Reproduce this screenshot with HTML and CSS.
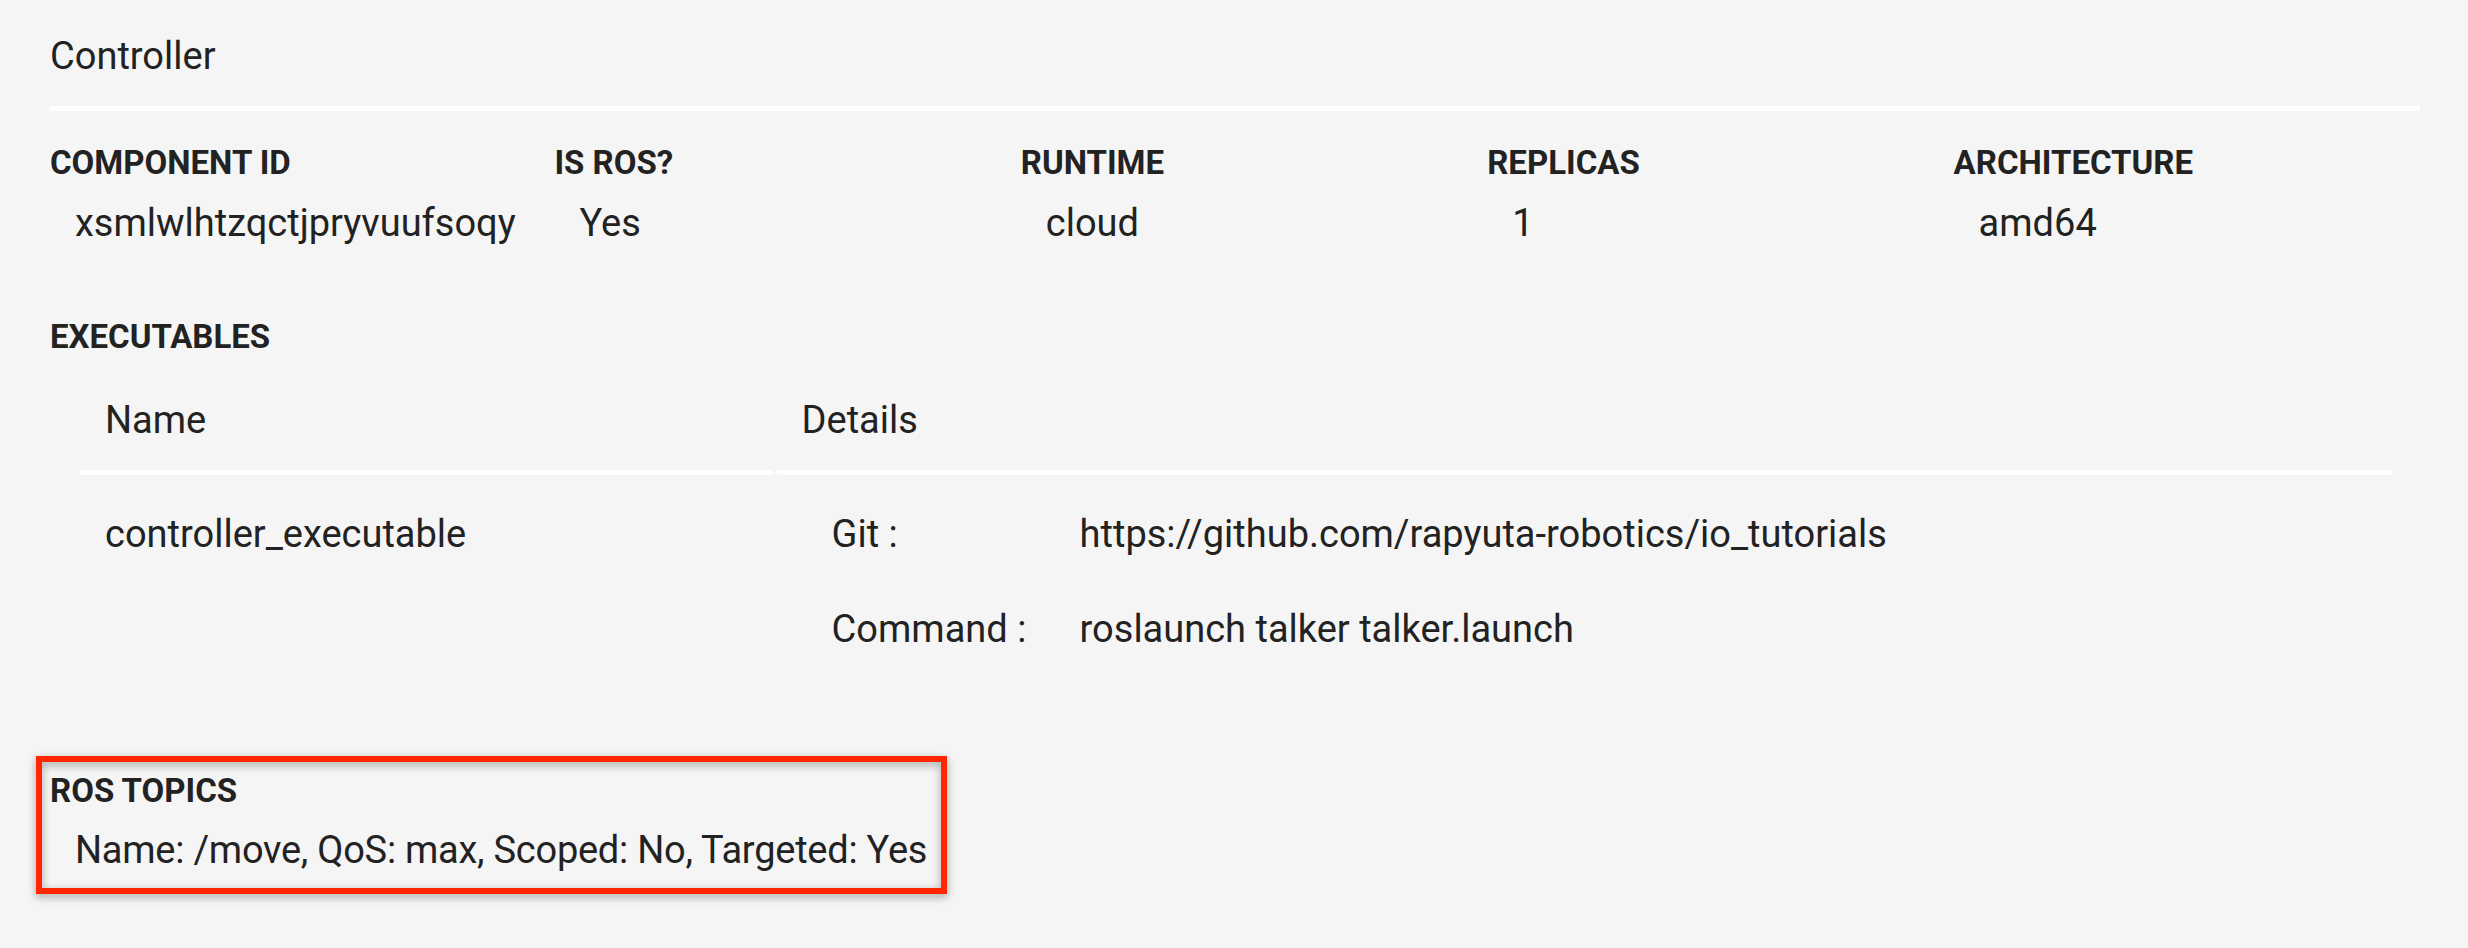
FILE: index.html
```html
<!DOCTYPE html>
<html lang="en">
<head>
<meta charset="utf-8">
<title>Controller</title>
<link rel="stylesheet" href="styles.css">
</head>
<body>
<main class="page">
  <h1 class="title">Controller</h1>
  <div class="rule"></div>

  <section class="info">
    <div class="label">COMPONENT ID</div>
    <div class="label">IS ROS?</div>
    <div class="label">RUNTIME</div>
    <div class="label">REPLICAS</div>
    <div class="label">ARCHITECTURE</div>
    <div class="value">xsmlwlhtzqctjpryvuufsoqy</div>
    <div class="value">Yes</div>
    <div class="value">cloud</div>
    <div class="value">1</div>
    <div class="value">amd64</div>
  </section>

  <h2 class="label section-title">EXECUTABLES</h2>
  <div class="exec-table">
    <div class="th">Name</div>
    <div class="th">Details</div>
    <div class="td">controller_executable</div>
    <div class="td">
      <div class="details">
        <div class="d-key">Git :</div>
        <div class="d-val">https://github.com/rapyuta-robotics/io_tutorials</div>
        <div class="d-key">Command :</div>
        <div class="d-val">roslaunch talker talker.launch</div>
      </div>
    </div>
  </div>

  <section class="ros">
    <div class="label">ROS TOPICS</div>
    <div class="value ros-value">Name: /move, QoS: max, Scoped: No, Targeted: Yes</div>
  </section>
</main>
</body>
</html>
```
FILE: styles.css
```css
html, body {
  margin: 0;
  padding: 0;
  background: #f5f5f5;
}

body {
  font-family: Roboto, "Liberation Sans", sans-serif;
  color: #222222;
  font-size: 38px;
  line-height: 48px;
  min-height: 948px;
}

.page {
  padding: 32px 48px 60px 50px;
}

.title {
  margin: 0 0 26px 0;
  font-size: 38px;
  font-weight: 400;
  line-height: 48px;
}

.rule {
  height: 5px;
  background: #ffffff;
}

.label {
  font-size: 33px;
  font-weight: 700;
  line-height: 40px;
  margin: 0;
}

.value {
  padding-left: 25px;
  font-size: 38px;
  line-height: 48px;
}

.info {
  margin-top: 32px;
  display: grid;
  grid-template-columns: 504fr 466fr 466fr 466fr 466fr;
  row-gap: 16px;
}

.section-title {
  margin-top: 70px;
}

.exec-table {
  display: grid;
  grid-template-columns: 692fr 1614fr;
  column-gap: 4px;
  margin: 0 28px 0 30px;
}

.th {
  padding: 39px 23px 26px 25px;
  border-bottom: 5px solid #ffffff;
}

.td {
  padding: 35px 23px 0 25px;
}

.details {
  display: grid;
  grid-template-columns: 248px 1fr;
  row-gap: 47px;
  margin-left: 30px;
}

.ros {
  position: relative;
  width: fit-content;
  margin-top: 118px;
}

.ros-value {
  margin-top: 15px;
  letter-spacing: -0.25px;
}

.ros::after {
  content: "";
  position: absolute;
  top: -15px;
  left: -14px;
  right: -20px;
  bottom: -20px;
  border: 6px solid #ff2600;
  filter: drop-shadow(0 3px 4px rgba(0, 0, 0, 0.35));
  pointer-events: none;
}
```
